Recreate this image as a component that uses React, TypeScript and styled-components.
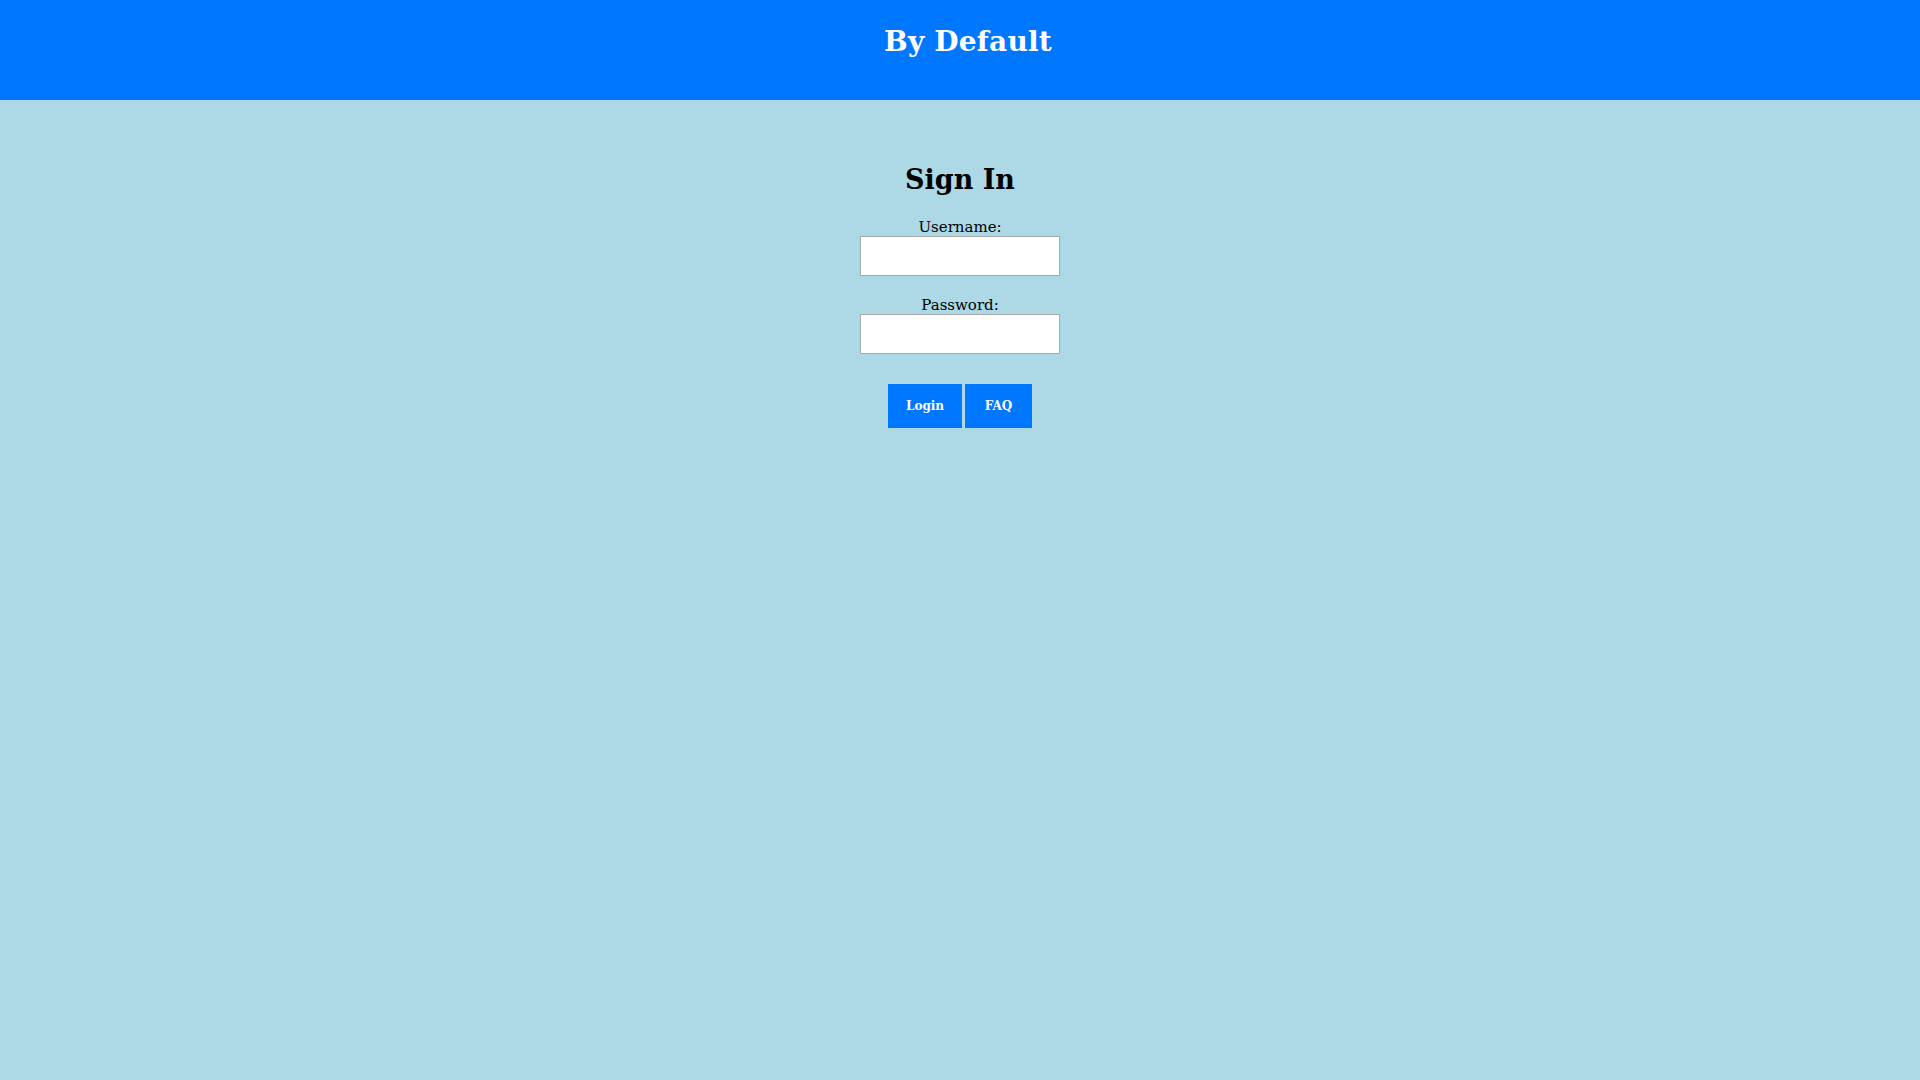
import React from "react";
import styled, { createGlobalStyle } from "styled-components";

const Global = createGlobalStyle`
  html, body { margin: 0; padding: 0; }
  body {
    background: #add8e6;
    font-family: "DejaVu Serif", "Liberation Serif", serif;
    min-height: 1080px;
  }
`;

const Header = styled.header`
  background: #0077ff;
  height: 100px;
  box-sizing: border-box;
  padding: 25px 0 0 16px;
  text-align: center;
`;

const Title = styled.h1`
  margin: 0;
  color: #fff;
  font-size: 28px;
  font-weight: bold;
  font-family: "DejaVu Serif", serif;
  letter-spacing: 0.2px;
`;

const Main = styled.main`
  display: flex;
  flex-direction: column;
  align-items: center;
  padding-top: 64px;
`;

const Heading = styled.h2`
  margin: 0 0 23px;
  font-size: 27px;
  font-weight: bold;
  color: #000;
`;

const Field = styled.div`
  display: flex;
  flex-direction: column;
  align-items: center;
  margin-bottom: 20px;
`;

const Label = styled.label`
  font-size: 15px;
  color: #000;
  line-height: 18px;
`;

const Input = styled.input`
  width: 200px;
  height: 40px;
  box-sizing: border-box;
  border: 1px solid #aaa;
  background: #fff;
  padding: 4px;
  font-size: 15px;
  font-family: inherit;
`;

const Buttons = styled.div`
  display: flex;
  gap: 3px;
  margin-top: 10px;
`;

const Button = styled.button<{ $w: number }>`
  width: ${(p) => p.$w}px;
  height: 44px;
  background: #0077ff;
  color: #fff;
  border: none;
  font-family: "DejaVu Serif", serif;
  font-size: 12px;
  font-weight: bold;
  cursor: pointer;
`;

export default function App() {
  return (
    <>
      <Global />
      <Header>
        <Title>By Default</Title>
      </Header>
      <Main>
        <Heading>Sign In</Heading>
        <Field>
          <Label htmlFor="u">Username:</Label>
          <Input id="u" type="text" />
        </Field>
        <Field>
          <Label htmlFor="p">Password:</Label>
          <Input id="p" type="password" />
        </Field>
        <Buttons>
          <Button $w={74}>Login</Button>
          <Button $w={67}>FAQ</Button>
        </Buttons>
      </Main>
    </>
  );
}
